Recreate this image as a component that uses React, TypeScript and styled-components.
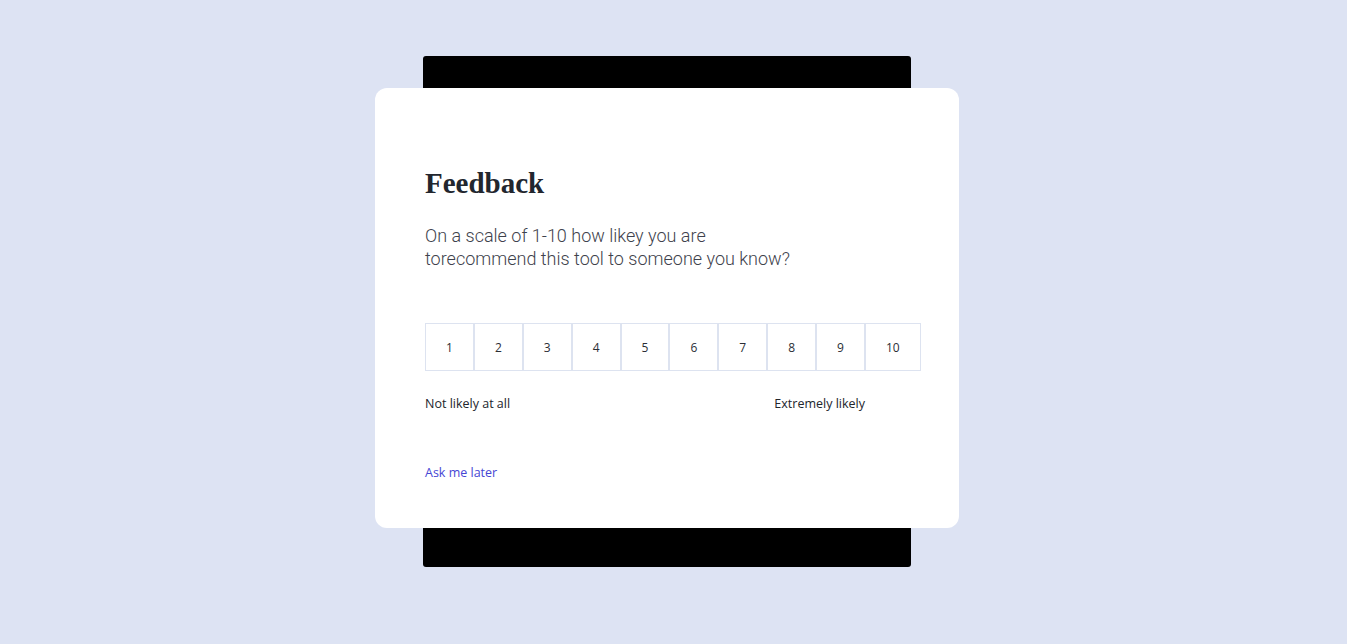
import React from 'react';
import styled, {createGlobalStyle} from 'styled-components';

const GlobalStyle = createGlobalStyle`
    html, body {
        margin: 0;
        padding: 0;
        background: #dde3f3;
    }
    body {
        font-family: "Open Sans", "Liberation Sans", sans-serif;
    }
`;

const Stage = styled.div`
    min-height: 644px;
    display: flex;
    justify-content: center;
    align-items: flex-start;
    padding: 56px 13px 0 0;
    box-sizing: border-box;
`;

const Backdrop = styled.div`
    width: 488px;
    background: #000;
    border-radius: 3px;
    padding: 32px 0 39px;
    display: flex;
    justify-content: center;
`;

const Card = styled.div`
    flex: none;
    width: 584px;
    height: 440px;
    box-sizing: border-box;
    margin: 0 -48px;
    background: #fff;
    border-radius: 12px;
    padding: 77px 50px 0;
    display: flex;
    flex-flow: column nowrap;
`;

const Title = styled.h1`
    margin: 0;
    font-family: "Liberation Serif", serif;
    font-weight: 700;
    font-size: 29px;
    line-height: 36px;
    color: #22262e;
`;

const Question = styled.p`
    margin: 23px 0 0;
    font-family: Roboto, "Liberation Sans", sans-serif;
    font-weight: 300;
    font-size: 18px;
    line-height: 23px;
    color: #3e424c;
`;

const Scale = styled.div`
    display: flex;
    margin-top: 53px;
`;

const ScaleButton = styled.button`
    height: 48px;
    padding: 0 20px;
    background: #fff;
    border: 1px solid #dde3f0;
    font-family: "Open Sans", sans-serif;
    font-size: 12px;
    color: #2b2e35;
    cursor: pointer;
`;

const Labels = styled.div`
    display: flex;
    justify-content: space-between;
    width: 440px;
    margin-top: 24px;
`;

const Label = styled.span`
    font-family: "Open Sans", sans-serif;
    font-size: 12.5px;
    font-weight: 500;
    color: #22252c;
`;

const Later = styled.a`
    margin-top: 52px;
    font-family: "Open Sans", sans-serif;
    font-size: 12.5px;
    color: #4646d4;
    text-decoration: none;
    cursor: pointer;
    align-self: flex-start;
`;

const values = [1, 2, 3, 4, 5, 6, 7, 8, 9, 10];

export default function App() {
    return (
        <>
            <GlobalStyle/>
            <Stage>
                <Backdrop>
                    <Card>
                        <Title>Feedback</Title>
                        <Question>
                            On a scale of 1-10 how likey you are<br/>
                            torecommend this tool to someone you know?
                        </Question>
                        <Scale>
                            {values.map(v => (
                                <ScaleButton key={v}>{v}</ScaleButton>
                            ))}
                        </Scale>
                        <Labels>
                            <Label>Not likely at all</Label>
                            <Label>Extremely likely</Label>
                        </Labels>
                        <Later>Ask me later</Later>
                    </Card>
                </Backdrop>
            </Stage>
        </>
    );
}
